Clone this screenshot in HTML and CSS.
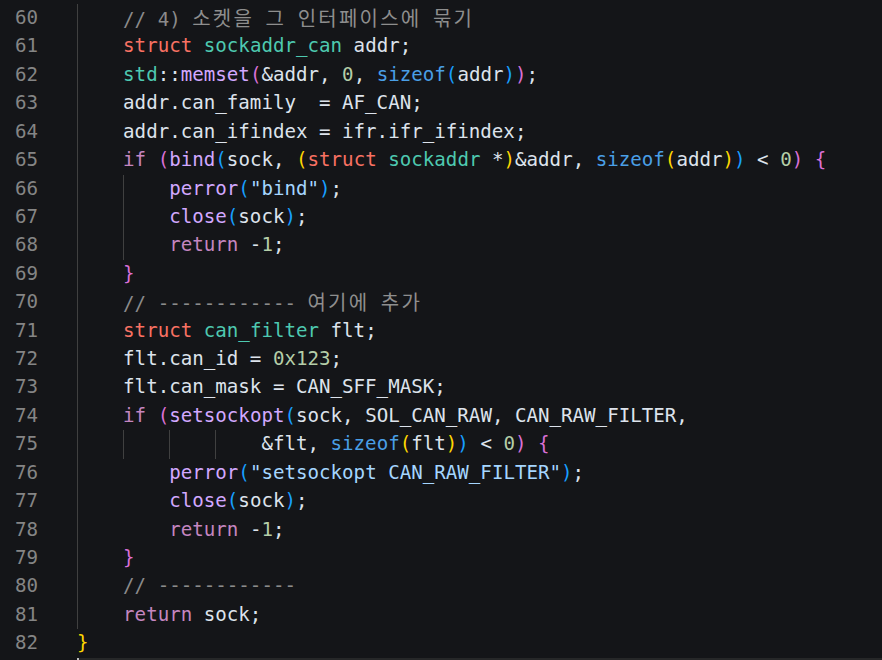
FILE: index.html
```html
<!DOCTYPE html>
<html lang="ko">
<head>
<meta charset="utf-8">
<title>code</title>
<link rel="stylesheet" href="styles.css">
</head>
<body>
<div class="editor">
<div class="ln"><span class="num">60</span><span class="code"><span class="g"></span><span class="cm">// 4) <span class="ko">소켓을</span> <span class="ko">그</span> <span class="ko">인터페이스에</span> <span class="ko">묶기</span></span></span></div>
<div class="ln"><span class="num">61</span><span class="code"><span class="g"></span><span class="k">struct</span> <span class="t">sockaddr_can</span> addr;</span></div>
<div class="ln"><span class="num">62</span><span class="code"><span class="g"></span><span class="t">std</span>::<span class="f">memset</span><span class="b2">(</span>&amp;addr, <span class="n">0</span>, <span class="s">sizeof</span><span class="b3">(</span>addr<span class="b3">)</span><span class="b2">)</span>;</span></div>
<div class="ln"><span class="num">63</span><span class="code"><span class="g"></span>addr.can_family  = AF_CAN;</span></div>
<div class="ln"><span class="num">64</span><span class="code"><span class="g"></span>addr.can_ifindex = ifr.ifr_ifindex;</span></div>
<div class="ln"><span class="num">65</span><span class="code"><span class="g"></span><span class="c">if</span> <span class="b2">(</span><span class="f">bind</span><span class="b3">(</span>sock, <span class="b1">(</span><span class="k">struct</span> <span class="t">sockaddr</span> *<span class="b1">)</span>&amp;addr, <span class="s">sizeof</span><span class="b1">(</span>addr<span class="b1">)</span><span class="b3">)</span> &lt; <span class="n">0</span><span class="b2">)</span> <span class="b2">{</span></span></div>
<div class="ln"><span class="num">66</span><span class="code"><span class="g"></span><span class="g"></span><span class="f">perror</span><span class="b3">(</span><span class="str">"bind"</span><span class="b3">)</span>;</span></div>
<div class="ln"><span class="num">67</span><span class="code"><span class="g"></span><span class="g"></span><span class="f">close</span><span class="b3">(</span>sock<span class="b3">)</span>;</span></div>
<div class="ln"><span class="num">68</span><span class="code"><span class="g"></span><span class="g"></span><span class="c">return</span> -<span class="n">1</span>;</span></div>
<div class="ln"><span class="num">69</span><span class="code"><span class="g"></span><span class="b2">}</span></span></div>
<div class="ln"><span class="num">70</span><span class="code"><span class="g"></span><span class="cm">// ------------ <span class="ko">여기에</span> <span class="ko">추가</span></span></span></div>
<div class="ln"><span class="num">71</span><span class="code"><span class="g"></span><span class="k">struct</span> <span class="t">can_filter</span> flt;</span></div>
<div class="ln"><span class="num">72</span><span class="code"><span class="g"></span>flt.can_id = <span class="n">0x123</span>;</span></div>
<div class="ln"><span class="num">73</span><span class="code"><span class="g"></span>flt.can_mask = CAN_SFF_MASK;</span></div>
<div class="ln"><span class="num">74</span><span class="code"><span class="g"></span><span class="c">if</span> <span class="b2">(</span><span class="f">setsockopt</span><span class="b3">(</span>sock, SOL_CAN_RAW, CAN_RAW_FILTER,</span></div>
<div class="ln"><span class="num">75</span><span class="code"><span class="g"></span><span class="g"></span><span class="g"></span><span class="g"></span>&amp;flt, <span class="s">sizeof</span><span class="b1">(</span>flt<span class="b1">)</span><span class="b3">)</span> &lt; <span class="n">0</span><span class="b2">)</span> <span class="b2">{</span></span></div>
<div class="ln"><span class="num">76</span><span class="code"><span class="g"></span>    <span class="f">perror</span><span class="b3">(</span><span class="str">"setsockopt CAN_RAW_FILTER"</span><span class="b3">)</span>;</span></div>
<div class="ln"><span class="num">77</span><span class="code"><span class="g"></span>    <span class="f">close</span><span class="b3">(</span>sock<span class="b3">)</span>;</span></div>
<div class="ln"><span class="num">78</span><span class="code"><span class="g"></span>    <span class="c">return</span> -<span class="n">1</span>;</span></div>
<div class="ln"><span class="num">79</span><span class="code"><span class="g"></span><span class="b2">}</span></span></div>
<div class="ln"><span class="num">80</span><span class="code"><span class="g"></span><span class="cm">// ------------</span></span></div>
<div class="ln"><span class="num">81</span><span class="code"><span class="g"></span><span class="c">return</span> sock;</span></div>
<div class="ln"><span class="num">82</span><span class="code"><span class="b1">}</span></span></div>
<div class="hscroll"><span class="thumb"></span></div>
</div>
</body>
</html>
```

FILE: styles.css
```css
html, body {
  margin: 0;
  padding: 0;
  background: #141518;
  overflow: hidden;
}
.editor {
  padding-top: 4px;
  font-family: "DejaVu Sans Mono", "Noto Sans CJK KR", monospace;
  font-size: 19.15px;
  color: #dde3ec;
}
.ln {
  display: flex;
  height: 28.43px;
  line-height: 28.43px;
}
.num {
  width: 38px;
  text-align: right;
  color: #858585;
  flex: none;
}
.code {
  margin-left: 39px;
  white-space: pre;
}
.g {
  display: inline-block;
  width: 4ch;
  height: 28.43px;
  vertical-align: top;
  box-shadow: inset 1px 0 0 #404040;
}
.ko {
  font-family: "Noto Sans CJK KR", sans-serif;
  font-size: 20px;
  letter-spacing: 2.2px;
  color: #8e8e8e;
}
.cm { color: #8b8b8b; }
.k { color: #f87163; }
.t { color: #4ec9b0; }
.f { color: #d2a8ff; }
.c { color: #c586c0; }
.s { color: #4a9fe6; }
.n { color: #b5cea8; }
.str { color: #a5d6ff; }
.b1 { color: #ffd700; }
.b2 { color: #da70d6; }
.b3 { color: #179fff; }
.hscroll {
  margin-left: 77px;
  height: 3px;
  background: #262728;
  display: flex;
}
.thumb {
  width: 2px;
  height: 3px;
  background: #bdbdbd;
}
```
